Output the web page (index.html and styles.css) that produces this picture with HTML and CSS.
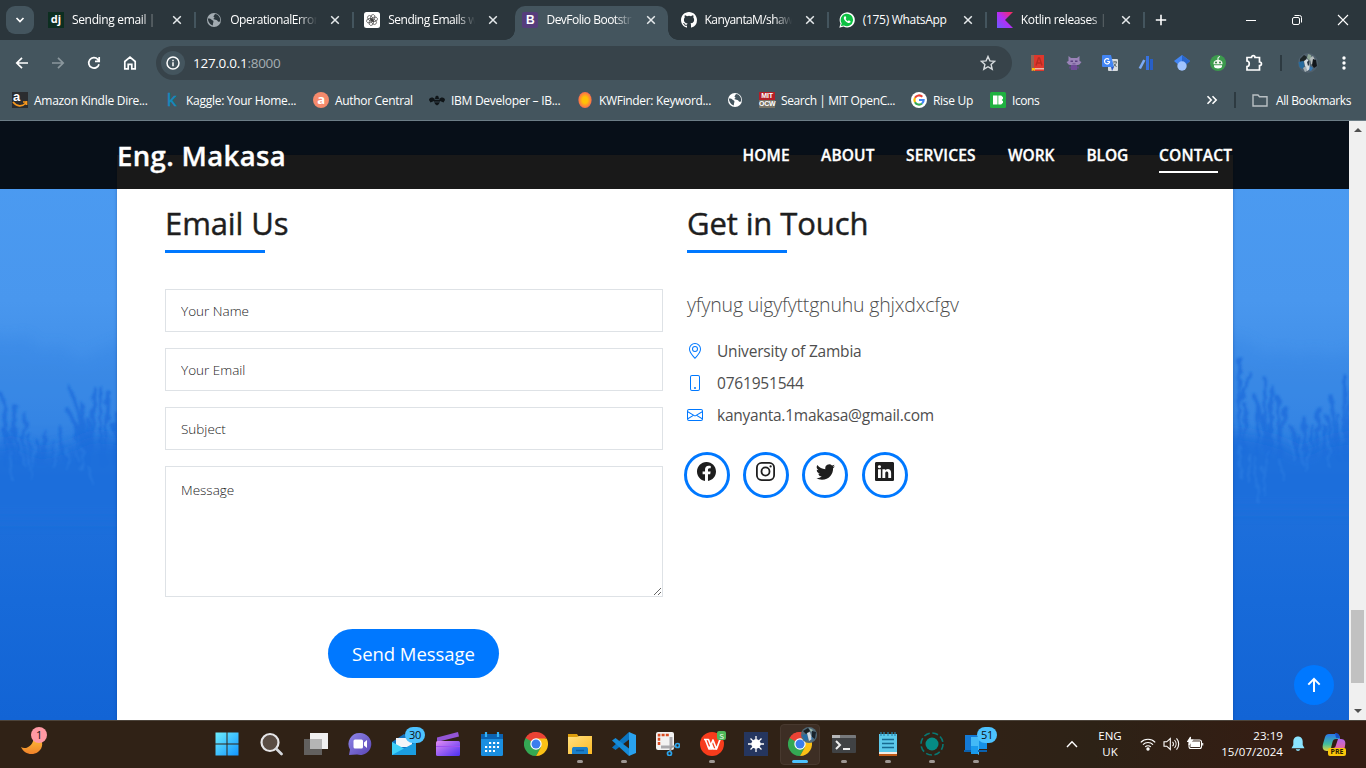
FILE: index.html
```html
<!DOCTYPE html>
<html lang="en">
<head>
<meta charset="utf-8">
<title>DevFolio Bootstrap</title>
<link rel="stylesheet" href="styles.css">
</head>
<body>
<svg class="defs" width="0" height="0" aria-hidden="true">
  <defs>
    <linearGradient id="gCyan" x1="0" y1="0" x2="24" y2="24" gradientUnits="userSpaceOnUse"><stop offset="0" stop-color="#6ff0fd"/><stop offset="1" stop-color="#1093ff"/></linearGradient>
    <linearGradient id="gKotlin" x1="0" y1="1" x2="1" y2="0"><stop offset="0" stop-color="#6a5cff"/><stop offset=".5" stop-color="#b52df5"/><stop offset="1" stop-color="#ff2a50"/></linearGradient>
    <linearGradient id="gChat" x1="0" y1="0" x2="1" y2="1"><stop offset="0" stop-color="#8e86e8"/><stop offset="1" stop-color="#5a45b5"/></linearGradient>
    <linearGradient id="gClip" x1="0" y1="0" x2="1" y2="1"><stop offset="0" stop-color="#e38cf4"/><stop offset="1" stop-color="#4b30f0"/></linearGradient>
    <linearGradient id="gFold" x1="0" y1="0" x2="1" y2="1"><stop offset="0" stop-color="#ffe080"/><stop offset="1" stop-color="#fcba24"/></linearGradient>
    <linearGradient id="gMoon" x1="0" y1="0" x2="0" y2="1"><stop offset="0" stop-color="#ffc83a"/><stop offset="1" stop-color="#f0822a"/></linearGradient>
    <linearGradient id="gCop1" x1="0" y1="0" x2="0" y2="1"><stop offset="0" stop-color="#2a78ea"/><stop offset=".6" stop-color="#43bf9c"/><stop offset="1" stop-color="#e4d540"/></linearGradient>
    <linearGradient id="gCop2" x1="0" y1="0" x2="0" y2="1"><stop offset="0" stop-color="#b266ee"/><stop offset="1" stop-color="#f4688a"/></linearGradient>
    <radialGradient id="gSun"><stop offset=".4" stop-color="#ffc107"/><stop offset="1" stop-color="#fb6b50"/></radialGradient>
    <symbol id="x" viewBox="0 0 10 10"><path d="M1.200 1.200l7.600 7.600M8.800 1.200L1.200 8.800" stroke="#e6eaec" stroke-width="1.500"/></symbol>
    <symbol id="globe" viewBox="0 0 16 16"><circle cx="8" cy="8" r="7" fill="currentColor"/><path d="M2 6.500c2 0 3 .3 3.600 1.300l1.600 1c.8 1-.4 2.200-.4 4.700C4 12.600 1.800 9.500 2 6.500zM9 2l-1.600 2.400 1.200 1.400-1.400 1.200 3.800 1.200 1.200 1.600 2-.4C14.800 5.500 12 2 9 2z" fill="var(--land)"/></symbol>
    <symbol id="chrome" viewBox="0 0 24 24"><path d="M12 12L1.600 6A12 12 0 0 1 22.400 6z" fill="#ea4335"/><path d="M12 12V0A12 12 0 0 0 1.600 6L6.800 15z" fill="#ea4335"/><path d="M12 12L1.600 6A12 12 0 0 0 12 24l5.200-9z" fill="#34a853"/><path d="M12 6.500H22.700A12 12 0 0 1 12 24l5-9z" fill="#fbc116"/><circle cx="12" cy="12" r="5.700" fill="#fff"/><circle cx="12" cy="12" r="4.500" fill="#3b7ded"/></symbol>
  </defs>
</svg>

<div class="screen">
  <header class="chrome">
    <div class="tabstrip">
      <button class="tabsearch"><svg width="10" height="8" viewBox="0 0 10 8" fill="none" stroke="#fff" stroke-width="1.700"><path d="M1.500 2L5 5.500 8.500 2"/></svg></button>
      <div class="tab"><span class="fav dj">dj</span><span class="title t1">Sending email | D</span><svg class="close"><use href="#x"/></svg></div>
      <div class="tab"><svg class="fav grey"><use href="#globe"/></svg><span class="title t2">OperationalError</span><svg class="close"><use href="#x"/></svg></div>
      <div class="tab nosep"><svg class="fav" viewBox="0 0 16 16"><rect width="16" height="16" rx="2.500" fill="#fff"/><g fill="none" stroke="#333" stroke-width=".6"><ellipse cx="8" cy="5.600" rx="2.200" ry="3.200" transform="rotate(15 8 8)"/><ellipse cx="8" cy="5.600" rx="2.200" ry="3.200" transform="rotate(75 8 8)"/><ellipse cx="8" cy="5.600" rx="2.200" ry="3.200" transform="rotate(135 8 8)"/><ellipse cx="8" cy="5.600" rx="2.200" ry="3.200" transform="rotate(195 8 8)"/><ellipse cx="8" cy="5.600" rx="2.200" ry="3.200" transform="rotate(255 8 8)"/><ellipse cx="8" cy="5.600" rx="2.200" ry="3.200" transform="rotate(315 8 8)"/></g></svg><span class="title t3">Sending Emails w</span><svg class="close"><use href="#x"/></svg></div>
      <div class="tab active nosep"><span class="fav boot">B</span><span class="title t4">DevFolio Bootstr</span><svg class="close"><use href="#x"/></svg></div>
      <div class="tab"><svg class="fav" viewBox="0 0 16 16" fill="#fff"><path d="M8 0C3.580 0 0 3.580 0 8c0 3.540 2.290 6.530 5.470 7.590.4.070.55-.17.55-.38 0-.19-.01-.82-.01-1.490-2.010.37-2.530-.49-2.690-.94-.09-.23-.48-.94-.82-1.130-.28-.15-.68-.52-.01-.53.63-.01 1.080.58 1.230.82.72 1.210 1.870.87 2.330.66.070-.52.28-.87.51-1.070-1.780-.2-3.640-.89-3.640-3.950 0-.87.31-1.590.82-2.150-.08-.2-.36-1.020.08-2.120 0 0 .67-.21 2.200.82a7.600 7.600 0 0 1 4 0c1.530-1.040 2.200-.82 2.200-.82.44 1.100.16 1.920.08 2.120.51.56.82 1.270.82 2.150 0 3.070-1.870 3.750-3.650 3.950.29.25.54.73.54 1.480 0 1.070-.01 1.930-.01 2.200 0 .21.15.46.55.38A8 8 0 0 0 16 8c0-4.420-3.580-8-8-8z"/></svg><span class="title t5">KanyantaM/shaw</span><svg class="close"><use href="#x"/></svg></div>
      <div class="tab"><svg class="fav" viewBox="0 0 16 16"><path d="M.3 15.700l1.200-4.200A7.600 7.600 0 1 1 4.600 14.600z" fill="#fff"/><path d="M1.900 14.100l.8-2.800A6.200 6.200 0 1 1 5 13.400z" fill="#0dc143"/><path d="M5.600 4.300c-1.600 1.400-.6 3.300 1 4.900 1.700 1.600 3.700 2.500 4.900 1v-1L9.800 8.300l-1 .9C7.800 8.800 7 8 6.600 7l.7-.9-.7-1.800z" fill="#fff"/></svg><span class="title t6">(175) WhatsApp</span><svg class="close"><use href="#x"/></svg></div>
      <div class="tab"><svg class="fav" viewBox="0 0 16 16"><path d="M0 0h16L8 8l8 8H0z" fill="url(#gKotlin)"/></svg><span class="title t7">Kotlin releases | K</span><svg class="close"><use href="#x"/></svg></div>
      <svg class="newtab" width="12" height="12" viewBox="0 0 12 12" stroke="#fff" stroke-width="1.600"><path d="M6 .8v10.400M.8 6h10.400"/></svg>
      <div class="wincontrols">
        <svg width="12" height="12" viewBox="0 0 12 12" stroke="#fff"><path d="M1 6.500h10"/></svg>
        <svg width="12" height="12" viewBox="0 0 12 12" stroke="#fff" fill="none"><rect x="1.500" y="3.500" width="7" height="7" rx="1.500"/><path d="M3.500 1.500H8.500a2 2 0 0 1 2 2v5"/></svg>
        <svg width="12" height="12" viewBox="0 0 12 12" stroke="#fff" stroke-width="1.100"><path d="M1 1l10 10M11 1L1 11"/></svg>
      </div>
    </div>

    <div class="toolbar">
      <div class="navbuttons">
        <svg viewBox="0 0 16 16"><path d="M14 8H3M8 2.800L2.800 8 8 13.200"/></svg>
        <svg class="dim" viewBox="0 0 16 16"><path d="M2 8h11M8 2.800L13.200 8 8 13.200"/></svg>
        <svg viewBox="0 0 16 16"><path d="M13 9.200A5.200 5.200 0 1 1 11.800 4.400L13 5.600M13.200 2v4.300H9"/></svg>
        <svg viewBox="0 0 16 16"><path d="M2.800 6.500L8 2.200l5.200 4.300v7.300H9.800V9.300H6.200v4.500H2.800z"/></svg>
      </div>
      <div class="omnibox">
        <span class="siteinfo"><svg width="14" height="14" viewBox="0 0 14 14" fill="none" stroke="#fff" stroke-width="1.500"><circle cx="7" cy="7" r="6"/><path d="M7 6.300v3.900M7 3.700v1.500"/></svg></span>
        <span class="url">127.0.0.1<span>:8000</span></span>
        <svg class="star" width="16" height="16" viewBox="0 0 16 16" fill="none" stroke="#d7dcdf" stroke-width="1.400"><path d="M8 1.500l1.900 4.400 4.800.4-3.600 3.200 1.100 4.700L8 11.700l-4.200 2.500 1.100-4.700L1.300 6.300l4.800-.4z"/></svg>
      </div>
      <div class="extensions">
        <svg viewBox="0 0 16 16"><path d="M1 0h13v16H1z" fill="#df372c"/><path d="M1 0h3v16H1z" fill="#936455"/><path d="M4 13h10v1.500H4z" fill="#f1b8a8"/><path d="M2 13h3v3l-1.500-1L2 16z" fill="#ffc107"/><path d="M6 10.500L8.500 3h1l2.500 7.500M7 8h4" fill="none" stroke="#b52c22" stroke-width="1.400"/></svg>
        <svg viewBox="0 0 16 16"><path d="M2.500 1l2.500 2h6l2.500-2v5l2 1-2 2.500-1.500.5H4L2.500 9.500.5 7l2-1z" fill="#9a83b8"/><path d="M5 10h6v5H5z" fill="#6f4b98"/><path d="M4.500 5.500H7V7H4.500zM9 5.500h2.500V7H9zM6.500 8.500h3v.8h-3z" fill="#5a4180"/><path d="M4 11.500v2M12 11.500v2" stroke="#6c4997" stroke-width="1.400"/></svg>
        <svg viewBox="0 0 16 16"><rect x="6" y="4" width="10" height="12" rx="1" fill="#d8dcdf"/><path d="M0 1a1 1 0 0 1 1-1h8l3 12H1a1 1 0 0 1-1-1z" fill="#4285f4"/><path d="M7.700 6.500A2.600 2.600 0 1 1 7 4.500M5.200 6.500h2.500" fill="none" stroke="#fff" stroke-width="1.200"/><path d="M11 7h4M13 6v1M14.500 7c-.5 2-1.500 3.500-3 4.500M11.800 8.500l2.700 3.500" fill="none" stroke="#5c6970" stroke-width="1"/><path d="M9 12h3l-2 4z" fill="#2a56c6"/></svg>
        <svg viewBox="0 0 16 16"><path d="M1.800 13.500L6.300 5" stroke="#7baaf7" stroke-width="2.600"/><path d="M8 1h3v14H8z" fill="#3772e0"/><path d="M12 4h3v11h-3z" fill="#285fc7"/></svg>
        <svg viewBox="0 0 16 16"><path d="M8 0l8 6-4 3.500H4L0 6z" fill="#4285f4"/><path d="M8 0l8 6-4 3.500L8 7z" fill="#2a66cc"/><circle cx="8" cy="11" r="4.700" fill="#a0c3ff"/></svg>
        <svg viewBox="0 0 16 16"><circle cx="8" cy="8" r="8" fill="#3c9a4d"/><path d="M3.500 8.500c0-5 9-5 9 0v.8h-9z" fill="#f2f7ee"/><path d="M4 10.300h8v1.200c0 2.500-8 2.500-8 0z" fill="#fff"/><path d="M8 5V2.500l2-1" stroke="#fff" fill="none"/><circle cx="6" cy="7.500" r="1" fill="#317d3c"/><circle cx="10" cy="7.500" r="1" fill="#317d3c"/></svg>
        <svg class="puzzle" viewBox="0 0 18 18" fill="none" stroke="#fff" stroke-width="1.700"><path d="M2 3.500h4.500c0-2.600 3.500-2.600 3.500 0h4.500V8c2.600 0 2.600 3.500 0 3.500V16H2v-3.500c3 0 3-5.500 0-5.500z"/></svg>
      </div>
      <span class="vsep"></span>
      <svg class="avatar" viewBox="0 0 20 20"><circle cx="10" cy="10" r="10" fill="#50606d"/><path d="M2 6l4-4 3 2-2 4-5 1z" fill="#1d2526"/><path d="M.5 9l5-1 1 5-2 3-3-2z" fill="#266a9d"/><path d="M6 8l3-2 2 2 1 8-3 2-2-5z" fill="#d5dde1"/><path d="M10 1l3 1 1 4-2 2-3-3z" fill="#8da596"/><path d="M12 5l3-2 2 4-2 5-2-1z" fill="#b5bcbd"/><path d="M15 6l3 1 1 6-3 2-2-3z" fill="#11151a"/><path d="M5 15l3-2 1 5-2 1z" fill="#a4afb4"/><path d="M12 13l3 2-2 3-2-1z" fill="#3477b4"/><path d="M9 9l2-2v5l-1 1z" fill="#293845"/></svg>
      <svg class="kebab" width="4" height="16" viewBox="0 0 4 16" fill="#fff"><circle cx="2" cy="3" r="1.700"/><circle cx="2" cy="8" r="1.700"/><circle cx="2" cy="13" r="1.700"/></svg>
    </div>

    <div class="bookmarks">
      <a class="bm b1"><span class="amazon">a<svg width="16" height="7" viewBox="0 0 16 7"><path d="M1 1c4 5 9 5 13 1M14.500 0v4M11 1h4" stroke="#f7981d" stroke-width="1.700" fill="none"/></svg></span><span>Amazon Kindle Dire...</span></a>
      <a class="bm b2"><span class="kaggle">k</span><span>Kaggle: Your Home...</span></a>
      <a class="bm b3"><span class="author">a</span><span>Author Central</span></a>
      <a class="bm b4"><svg class="ic" viewBox="0 0 16 16" fill="#101518"><path d="M0 8c0-3 4-3.500 6-1l.5-2.500 1.500-1 1.500 1L10 7c2-2.500 6-2 6 1l-1.500 2.500L11 9l-1 3-2 1.500L6 12 5 9l-3.500 1.500z"/><path d="M5.500 7.500h5M5.500 10h5" stroke="#44555e" stroke-width=".7"/></svg><span>IBM Developer – IB...</span></a>
      <a class="bm b5"><svg class="ic" viewBox="0 0 16 16"><ellipse cx="8" cy="8" rx="6.600" ry="8" fill="url(#gSun)"/></svg><span>KWFinder: Keyword...</span></a>
      <a class="bm"><svg class="ic white"><use href="#globe"/></svg></a>
      <a class="bm b7"><span class="mit"><i>MIT</i><i>OCW</i></span><span>Search | MIT OpenC...</span></a>
      <a class="bm b8"><svg class="ic" viewBox="0 0 16 16" fill="none" stroke-width="2.200"><circle cx="8" cy="8" r="8" fill="#fff" stroke="none"/><path d="M11.300 4.800A4.600 4.600 0 0 0 4 5.800" stroke="#ea4335"/><path d="M4 5.800a4.600 4.600 0 0 0 0 4.400" stroke="#fbbc05"/><path d="M4 10.200a4.600 4.600 0 0 0 7 1.300" stroke="#34a853"/><path d="M11 11.500A4.600 4.600 0 0 0 12.600 8H8" stroke="#4285f4"/></svg><span>Rise Up</span></a>
      <a class="bm b9"><svg class="ic" viewBox="0 0 16 16"><rect width="16" height="16" rx="1.500" fill="#1fb141"/><path d="M3 3.500h4.500v9H3zM8.300 3.500h2.900L13 5.300v1.500L11.800 8 13 9.200v1.500l-1.800 1.800H8.300z" fill="#fff"/></svg><span>Icons</span></a>
      <div class="bmend">
        <svg width="12" height="10" viewBox="0 0 12 10" fill="none" stroke="#fff" stroke-width="1.600"><path d="M1.500 1.200L5.200 5 1.500 8.800M6.500 1.200L10.200 5 6.500 8.800"/></svg>
        <span class="vsep"></span>
        <svg width="16" height="13" viewBox="0 0 16 13" fill="none" stroke="#b9c0c4" stroke-width="1.400"><path d="M1 1h5l1.500 1.800H15V12H1z"/></svg>
        <span class="all">All Bookmarks</span>
      </div>
    </div>
  </header>

  <main class="page">
    <div class="view">
      <svg class="forest" width="1349" height="599" viewBox="0 121 1349 599" preserveAspectRatio="none">
        <defs>
          <linearGradient id="sky" x1="0" y1="0" x2="0" y2="1"><stop offset="0" stop-color="#4c9cf2"/><stop offset=".3" stop-color="#4997ee"/><stop offset=".42" stop-color="#408ee8"/><stop offset=".5" stop-color="#3a89e6"/><stop offset=".6" stop-color="#2071dc"/><stop offset=".8" stop-color="#176ad9"/><stop offset="1" stop-color="#1264d5"/></linearGradient>
          <filter id="soft" x="-5%" y="-5%" width="110%" height="110%"><feTurbulence type="fractalNoise" baseFrequency=".09" numOctaves="2" seed="4" result="n"/><feDisplacementMap in="SourceGraphic" in2="n" scale="9" result="d"/><feGaussianBlur in="d" stdDeviation=".8"/></filter>
          <filter id="haze" x="-5%" y="-20%" width="110%" height="140%"><feGaussianBlur stdDeviation="7"/></filter>
        </defs>
        <rect y="121" width="1349" height="599" fill="url(#sky)"/>
        <g filter="url(#haze)" fill="#2a7de0" opacity=".25"><path d="M-19 335l30 5 15-5 14 15 20-5 20 15 20-10 40-16v110H-19z"/><path d="M1213 335l32 5 20 14 20-4 12 6 20-5 12 6 40-12v120H1213z"/></g>
        <g filter="url(#soft)" fill="none" stroke="#1d6cdb" stroke-width="3.600" stroke-linecap="round" opacity=".78">
          <path d="M2 395l5 38 8 30M15 405l-5 50M26 415l-6 50M14 428l6 36M46 432l-4 30M59 426l6 36M70 388l10 30 4 46M66 408l12 20 8 36M82 405l4 50M94 388l-4 76M101 388l0 76M109 392l-4 70M118 415l-6 48M114 424v40M88 420v40M76 428v34M38 442v20M52 440l3 22M5 430v34M30 436l-3 28"/>
          <path d="M1240 358l-2 92M1249 372l-8 32M1264 378l2 80M1273 388l-6 70M1254 395l10 30 2 34M1277 396l4 60M1286 408l-8 50M1304 418l2 40M1320 408l-4 50M1331 396l6 62M1345 376l-1 84M1351 390l-6 68M1327 416l6 40M1292 428l4 30M1246 405l-3 50M1258 410v46M1271 420v40M1312 425v34M1338 415v44M1298 436v24M1348 420v40M1324 425v34"/>
        </g>
        <g filter="url(#haze)" fill="#1d6edb" opacity=".85"><path d="M-25 448l41-6 24 12 30-8 22-10 45 4v80H-25z"/><path d="M1210 430l43 5 30 8 18 10 25-12 44-6v75H1210z"/></g>
        <g filter="url(#soft)" fill="none" stroke="#4393ec" stroke-width="2" opacity=".28"><path d="M20 440l4 25M34 445l-3 35M52 437l4 25M66 448l3 24M84 450l-4 20M88 466l4 18M10 450l2 30M28 440v30M58 445l-4 24M74 440l3 20M1240 446l2 34M1254 455l4 48M1268 450l-5 40M1290 440l5 22M1310 452l-5 20M1328 440l2 28M1280 460l3 20M1248 452v30M1262 466l3 30M1300 444l3 22"/></g>
      </svg>
      <section class="card">
        <div class="col">
          <h5>Email Us</h5>
          <form class="form">
            <input type="text" placeholder="Your Name">
            <input type="text" placeholder="Your Email">
            <input type="text" placeholder="Subject">
            <textarea placeholder="Message"></textarea>
            <button type="button" class="send">Send Message</button>
          </form>
        </div>
        <div class="col">
          <h5 class="touch">Get in Touch</h5>
          <p class="lead">yfynug uigyfyttgnuhu ghjxdxcfgv</p>
          <ul class="info">
            <li class="i1"><svg viewBox="0 0 16 16"><path d="M12.166 8.940c-.524 1.062-1.234 2.120-1.960 3.070A31.500 31.500 0 0 1 8 14.580a31.500 31.500 0 0 1-2.206-2.570c-.726-.95-1.436-2.008-1.960-3.070C3.304 7.867 3 6.862 3 6a5 5 0 0 1 10 0c0 .862-.305 1.867-.834 2.940M8 16s6-5.686 6-10A6 6 0 0 0 2 6c0 4.314 6 10 6 10"/><path d="M8 8a2 2 0 1 1 0-4 2 2 0 0 1 0 4m0 1a3 3 0 1 0 0-6 3 3 0 0 0 0 6"/></svg><span>University of Zambia</span></li>
            <li class="i2"><svg viewBox="0 0 16 16"><path d="M11 1a1 1 0 0 1 1 1v12a1 1 0 0 1-1 1H5a1 1 0 0 1-1-1V2a1 1 0 0 1 1-1zM5 0a2 2 0 0 0-2 2v12a2 2 0 0 0 2 2h6a2 2 0 0 0 2-2V2a2 2 0 0 0-2-2z"/><path d="M8 14a1 1 0 1 0 0-2 1 1 0 0 0 0 2"/></svg><span>0761951544</span></li>
            <li class="i3"><svg viewBox="0 0 16 16"><path d="M0 4a2 2 0 0 1 2-2h12a2 2 0 0 1 2 2v8a2 2 0 0 1-2 2H2a2 2 0 0 1-2-2zm2-1a1 1 0 0 0-1 1v.217l7 4.200 7-4.200V4a1 1 0 0 0-1-1zm13 2.383-4.708 2.825L15 11.105zm-.034 6.876-5.640-3.471L8 9.583l-1.326-.795-5.640 3.470A1 1 0 0 0 2 13h12a1 1 0 0 0 .966-.741M1 11.105l4.708-2.897L1 5.383z"/></svg><span>kanyanta.1makasa@gmail.com</span></li>
          </ul>
          <div class="social">
            <a><svg viewBox="0 0 16 16"><path d="M16 8.049c0-4.446-3.582-8.050-8-8.050C3.580 0-.002 3.603-.002 8.050c0 4.017 2.926 7.347 6.750 7.951v-5.625h-2.030V8.050H6.750V6.275c0-2.017 1.195-3.131 3.022-3.131.876 0 1.791.157 1.791.157v1.980h-1.009c-.993 0-1.303.621-1.303 1.258v1.510h2.218l-.354 2.326H9.250V16c3.824-.604 6.750-3.934 6.750-7.951"/></svg></a>
            <a><svg viewBox="0 0 16 16" fill="none" stroke="currentColor" stroke-width="1.500"><rect x=".75" y=".75" width="14.500" height="14.500" rx="4"/><circle cx="8" cy="8" r="3.400"/><circle cx="12.300" cy="3.700" r=".95" fill="currentColor" stroke="none"/></svg></a>
            <a><svg viewBox="0 0 16 16"><path d="M5.026 15c6.038 0 9.341-5.003 9.341-9.334q.002-.211-.006-.422A6.700 6.700 0 0 0 16 3.542a6.700 6.700 0 0 1-1.889.518 3.300 3.300 0 0 0 1.447-1.817 6.500 6.500 0 0 1-2.087.793A3.286 3.286 0 0 0 7.875 6.030a9.320 9.320 0 0 1-6.767-3.429 3.290 3.290 0 0 0 1.018 4.382A3.300 3.300 0 0 1 .64 6.575v.045a3.290 3.290 0 0 0 2.632 3.218 3.200 3.200 0 0 1-.865.115 3 3 0 0 1-.614-.057 3.280 3.280 0 0 0 3.067 2.277A6.600 6.600 0 0 1 .78 13.580a6 6 0 0 1-.780-.045A9.340 9.340 0 0 0 5.026 15"/></svg></a>
            <a><svg viewBox="0 0 16 16"><path d="M0 1.146C0 .513.526 0 1.175 0h13.650C15.474 0 16 .513 16 1.146v13.708c0 .633-.526 1.146-1.175 1.146H1.175C.526 16 0 15.487 0 14.854zm4.943 12.248V6.169H2.542v7.225zm-1.200-8.212c.837 0 1.358-.554 1.358-1.248-.015-.709-.520-1.248-1.342-1.248S2.400 3.226 2.400 3.934c0 .694.521 1.248 1.327 1.248zm4.908 8.212V9.359c0-.216.016-.432.080-.586.173-.431.568-.878 1.232-.878.869 0 1.216.662 1.216 1.634v3.865h2.401V9.250c0-2.220-1.184-3.252-2.764-3.252-1.274 0-1.845.7-2.165 1.193v.025h-.016l.016-.025V6.169h-2.400c.030.678 0 7.225 0 7.225z"/></svg></a>
          </div>
        </div>
      </section>
      <nav class="navbar">
        <a class="brand">Eng. Makasa</a>
        <div class="links"><a class="n1">HOME</a><a class="n2">ABOUT</a><a class="n3">SERVICES</a><a class="n4">WORK</a><a class="n5">BLOG</a><a class="n6 current">CONTACT</a></div>
      </nav>
      <a class="totop"><svg width="16" height="16" viewBox="0 0 16 16" fill="none" stroke="#fff" stroke-width="2"><path d="M8 15V2M2.300 7.600L8 1.900l5.700 5.700"/></svg></a>
    </div>
    <div class="scrollbar"><i class="up"></i><i class="thumb"></i><i class="down"></i></div>
  </main>

  <footer class="taskbar">
    <div class="weather"><svg width="24" height="24" viewBox="0 0 24 24"><path d="M1 15c4 3 13 0 13-12 9 2 11 12 4 17-6 4-14 2-17-5z" fill="url(#gMoon)"/></svg><b class="badge pink">1</b></div>
    <div class="apps">
      <span class="start"><svg viewBox="0 0 24 24" fill="url(#gCyan)"><path d="M.5.5h11v11H.5zM12.500.5h11v11h-11zM.5 12.500h11v11H.5zM12.500 12.500h11v11h-11z"/></svg></span>
      <span class="start"><svg viewBox="0 0 24 24" fill="none"><circle cx="11" cy="10.500" r="8.500" fill="#5a4d44" stroke="#e6e6e8" stroke-width="2.200"/><path d="M17.500 17l5 5" stroke="#d5d8dc" stroke-width="2.700" stroke-linecap="round"/></svg></span>
      <span><svg viewBox="0 0 24 24"><path d="M6 1h18v16H6z" fill="#f0f0f0"/><path d="M0 7h18v16H0z" fill="#6b6b6b" opacity=".85"/><path d="M6 7h12v10H6z" fill="#b5b5b5"/></svg></span>
      <span><svg viewBox="0 0 24 24"><path d="M12 1a11 11 0 1 1-3 21.500L1 23l1-5.500A11 11 0 0 1 12 1z" fill="url(#gChat)"/><rect x="5.500" y="7.500" width="9.500" height="9" rx="1.500" fill="#fff"/><path d="M16 10.500l3-2.500v8l-3-2.500z" fill="#fff"/></svg></span>
      <span><svg viewBox="0 0 24 24"><path d="M0 10L12 2l12 8v13H0z" fill="#1272bf"/><path d="M4 6h16v9H4z" fill="#f2f4f8"/><path d="M0 10l24 13H0z" fill="#3fd0f8"/><path d="M24 10L0 23h24z" fill="#1a9de0"/></svg><b class="badge">30</b></span>
      <span><svg viewBox="0 0 24 24"><path d="M1 5.500L22 0l1 4.500L1 10z" fill="#9355d6"/><rect y="9" width="24" height="15" rx="1.500" fill="url(#gClip)"/><path d="M0 14.500h24" stroke="#a050f0" stroke-width="1"/></svg></span>
      <span><svg viewBox="0 0 24 24"><rect x="1" y="2" width="22" height="22" rx="1.500" fill="#1a8fe0"/><path d="M1 2h22v5H1z" fill="#0b62b0"/><path d="M6 0v5M18 0v5" stroke="#35b2f5" stroke-width="2.200"/><path d="M9 11h11M5 15h14M5 19h10" stroke="#fff" stroke-width="2.200" stroke-dasharray="2.200 1.800"/></svg></span>
      <span><svg><use href="#chrome"/></svg></span>
      <span class="run"><svg viewBox="0 0 24 24"><path d="M0 2h9l2 3h11v6H0z" fill="#dc9d0c"/><path d="M0 5h9l2-1h13v18H0z" fill="url(#gFold)"/><path d="M4 22v-5c0-1.500 1-2 2-2h12c1 0 2 .5 2 2v5z" fill="#1a80ca"/><path d="M8 18.500h8" stroke="#0c5da3" stroke-width="1.500"/></svg></span>
      <span class="run"><svg viewBox="0 0 24 24"><path d="M17 0l7 3v18l-7 3z" fill="#29a2ef"/><path d="M17 0v7.500L3.500 18 0 15.500z" fill="#0b74c0"/><path d="M17 24v-7.500L3.500 6 0 8.500z" fill="#168bd8"/></svg></span>
      <span><svg viewBox="0 0 24 24"><rect y="0" width="18" height="18" rx="2" fill="#f2f2f2"/><path d="M3 13V3h10" stroke="#d94b20" stroke-width="2.500" fill="none" stroke-dasharray="3 1.200"/><path d="M15 5v10M5 15h10" stroke="#a9a9ad" stroke-width="3" fill="none"/><path d="M15 15l5-1M15 15l-1 5" stroke="#999" stroke-width="2"/><circle cx="21.500" cy="13.500" r="2" fill="none" stroke="#2aa4ec" stroke-width="1.700"/><circle cx="13.500" cy="21.500" r="2" fill="none" stroke="#2aa4ec" stroke-width="1.700"/></svg></span>
      <span class="run"><svg viewBox="0 0 24 24"><circle cx="12" cy="12" r="12" fill="#f73c1c"/><path d="M4 7.500h4.500l3.500 9.500h-3L5.500 8M9.500 16.500L13 8l3.500 9L20 7.500M16.500 17h-3L11 11" stroke="#fff" stroke-width="1.700" stroke-linejoin="round" fill="none"/></svg><b class="badge green">S</b></span>
      <span><svg viewBox="0 0 24 24"><path d="M0 0h24v24H0z" fill="#25365f"/><circle cx="12" cy="12" r="4.700" fill="#fff"/><path d="M12 4v16M4 12h16M6.500 6.500l11 11M17.500 6.500l-11 11" stroke="#fff" stroke-width="1.300"/></svg></span>
      <span class="run focus"><svg><use href="#chrome"/></svg><svg class="mini" viewBox="0 0 16 16"><circle cx="8" cy="8" r="8" fill="#526a78"/><path d="M2 4l5-3 2 3-4 3z" fill="#161f22"/><path d="M1 8l5-1 1 6-3 1z" fill="#236ea6"/><path d="M6 6l3-1 2 7-3 2z" fill="#cfdbe2"/><path d="M11 4l4 1-1 7-3-2z" fill="#18232c"/><path d="M8 1l4 2-2 2z" fill="#9db6a9"/><path d="M10 10l2 1-1 3z" fill="#3477b4"/></svg></span>
      <span class="run"><svg viewBox="0 0 24 24"><rect y="3" width="24" height="18" rx="1" fill="#404244"/><path d="M0 4a1 1 0 0 1 1-1h22a1 1 0 0 1 1 1v2H0z" fill="#77797b"/><path d="M0 3h8v3H0z" fill="#b6b7b8"/><path d="M4 9l4 4-4 4M11 17h7" stroke="#eee" stroke-width="2" fill="none"/></svg></span>
      <span class="run"><svg viewBox="0 0 24 24"><path d="M3 21h18v3H3z" fill="#c05b18"/><path d="M3 2h18v19H3z" fill="#5cc9ea"/><path d="M3 20h18v2H3z" fill="#f2ece4"/><path d="M5 0v4M8 0v4M12 0v4M16 0v4M19 0v4" stroke="#2789b4" stroke-width="1.200"/><path d="M6 7.500h12M6 11.500h12M6 15.500h12" stroke="#176a91" stroke-width="1.500"/></svg></span>
      <span class="run"><svg viewBox="0 0 24 24"><circle cx="12" cy="12" r="6.500" fill="#058b85"/><circle cx="12" cy="12" r="11" fill="none" stroke="#087873" stroke-width="1.600" stroke-dasharray="6 2.640"/></svg></span>
      <span class="run"><svg viewBox="0 0 24 24"><path d="M1 3h12v15H1z" fill="#147ad6"/><path d="M7 5h16v12H7z" fill="#1691e6"/><path d="M7 5h8v18l-4-3-4 1z" fill="#43b9f6"/><path d="M0 18h23v2H0z" fill="#0b61ad"/><path d="M7 14h7v8H7z" fill="#199aec"/></svg><b class="badge">51</b></span>
    </div>
    <div class="tray">
      <svg class="caret" width="12" height="8" viewBox="0 0 12 8" fill="none" stroke="#fff" stroke-width="1.400"><path d="M1 7l5-5.200L11 7"/></svg>
      <div class="lang">ENG<br>UK</div>
      <div class="status">
        <svg width="16" height="16" viewBox="0 0 16 16" fill="none" stroke="#fff" stroke-width="1.200"><path d="M.8 6.300a10 10 0 0 1 14.400 0M3 8.600a7 7 0 0 1 10 0M5.200 10.900a4 4 0 0 1 5.600 0"/><circle cx="8" cy="13" r="1.100" fill="#fff"/></svg>
        <svg width="17" height="16" viewBox="0 0 17 16" fill="none" stroke="#fff" stroke-width="1.100"><path d="M1 5.800h2.700L7.300 2.500v11L3.700 10.200H1zM9.500 5.800a3 3 0 0 1 0 4.400M11.500 4a6 6 0 0 1 0 8M13.500 2.300a8.500 8.500 0 0 1 0 11.400"/></svg>
        <svg width="17" height="16" viewBox="0 0 17 16" fill="none" stroke="#fff" stroke-width="1.100"><rect x="2" y="4" width="12.500" height="8.500" rx="2"/><rect x="4" y="6" width="8.500" height="4.500" fill="#fff"/><path d="M15.700 7v2.500"/><path d="M3.500 1L.7 5.500h2L2 9l3.500-5H3.200z" fill="#fff"/></svg>
      </div>
      <div class="clock">23:19<br>15/07/2024</div>
      <svg class="bell" width="14" height="16" viewBox="0 0 14 16" fill="#8be4ff"><path d="M7 .5c3 0 4.700 2.200 4.700 5v3.600l1.800 3.100H.5l1.800-3.100V5.500C2.300 2.700 4 .5 7 .5zM4.800 13.300h4.400c-.4 2.100-4 2.100-4.400 0z"/></svg>
      <div class="copilot"><svg width="24" height="24" viewBox="0 0 24 24"><path d="M7 2h7c3 0 4 2 4 5h-4c-2 0-3 1-3.500 3L9 16c-.5 2-2 3-4 3-4 0-5-3-4-7l2-7c.6-2 2-3 4-3z" fill="url(#gCop1)"/><path d="M16 7h3c4 0 5 3 4 7l-1 5h-8l-3-3c2 0 2.500-1 3-3z" fill="url(#gCop2)"/><path d="M13 1c3 0 4 1 5 5h-4z" fill="#1851c8"/></svg><b>PRE</b></div>
    </div>
  </footer>
</div>
</body>
</html>
```

FILE: styles.css
```css
* { box-sizing: border-box; }
body { margin: 0; overflow: hidden; font-family: "Open Sans", "Noto Sans", sans-serif; }
svg { display: block; flex: none; }
.defs { position: absolute; }
.screen { width: 1366px; height: 768px; display: flex; flex-direction: column; overflow: hidden; }

/* browser frame */
.chrome { height: 121px; background: #44555e; border-bottom: 1px solid #6c7d86; color: #fff; }
.tabstrip { height: 40px; background: #2b363c; display: flex; align-items: center; padding-left: 6px; }
.tabsearch { width: 28px; height: 28px; border: 0; border-radius: 9px; background: #44555e; display: grid; place-items: center; padding: 0; margin-right: 6px; }
.tab { width: 158.150px; height: 34px; margin-top: 6px; padding: 0 0 6px 8px; display: flex; align-items: center; position: relative; flex: none; font-size: 12px; }
.tab::after { content: ""; position: absolute; right: 2px; top: 6px; width: 2px; height: 16px; background: #44555e; }
.tab.nosep::after { display: none; }
.tab.active { z-index: 1; }
.tab.active::before { content: ""; position: absolute; inset: 0 5px 0 1px; background: #44555e; border-radius: 10px 10px 0 0; z-index: -1; }
/* flared feet of the selected tab */
.tab.active::after { display: block; right: -5px; left: -9px; top: 24px; width: auto; height: 10px; z-index: -2; background: radial-gradient(circle at 0 0, transparent 9.500px, #44555e 10px) 0 0 / 10px 10px no-repeat, radial-gradient(circle at 100% 0, transparent 9.500px, #44555e 10px) 100% 0 / 10px 10px no-repeat; }
.fav { width: 16px; height: 16px; margin-right: 8px; flex: none; }
.fav.grey { color: #a2abb1; --land: #2b363c; }
.fav.dj { background: #0c2e20; font: bold 11px/14px "Open Sans", sans-serif; text-align: center; }
.fav.boot { background: #563d7c; border-radius: 2px; font: bold 12px/16px "Liberation Sans", sans-serif; text-align: center; }
.title { width: 88px; white-space: nowrap; letter-spacing: -.4px; line-height: 20px; mask-image: linear-gradient(90deg, #000 78%, transparent 99%); }
.t1, .t7 { letter-spacing: -.35px; }
.t2 { letter-spacing: -.45px; }
.t3, .t4 { letter-spacing: -.5px; }
.t5 { letter-spacing: -.6px; }
.t6 { mask-image: none; letter-spacing: -.3px; }
.close { width: 10px; height: 10px; margin-left: 12px; }
.newtab { margin-left: 8px; }
.wincontrols { margin-left: auto; display: flex; gap: 34px; padding-right: 17px; }

.toolbar { height: 46px; display: flex; align-items: center; padding-left: 14px; border-radius: 8px 8px 0 0; }
.navbuttons { display: flex; gap: 20px; width: 142px; }
.navbuttons svg { width: 16px; height: 16px; fill: none; stroke: #fff; stroke-width: 1.700; }
.navbuttons .dim { stroke: #8b979d; }
.omnibox { width: 856px; height: 34px; border-radius: 17px; background: #37434a; display: flex; align-items: center; padding: 0 16px 0 5px; }
.siteinfo { width: 24px; height: 24px; border-radius: 50%; background: #44555e; display: grid; place-items: center; }
.url { margin-left: 8px; font-size: 13.500px; letter-spacing: -.28px; }
.url span { color: #a5aeb3; }
.star { margin-left: auto; }
.extensions { display: flex; gap: 20px; margin-left: 18px; align-items: center; }
.extensions svg { width: 16px; height: 16px; }
.extensions .puzzle { width: 18px; height: 18px; margin: -1px -1px 0; }
.vsep { width: 2px; height: 16px; background: #2d3a41; flex: none; }
.toolbar .vsep { margin-left: 18px; }
.avatar { width: 20px; height: 20px; margin-left: 16px; }
.kebab { margin-left: 24px; }

.bookmarks { height: 28px; display: grid; grid-template-columns: 151px 150px 116px 148px 150px 32px 152px 79px 1fr auto; align-items: center; padding: 0 15px 0 12px; font-size: 12px; white-space: nowrap; }
.bm { display: flex; align-items: center; gap: 6px; letter-spacing: -.4px; height: 20px; }
.b1 { letter-spacing: -.28px; }
.b2, .b4 { letter-spacing: -.28px; }
.b2 { gap: 7px; }
.b3, .b5 { letter-spacing: -.33px; }
.b8 { letter-spacing: -.3px; }
.ic { width: 16px; height: 16px; }
.ic.white { color: #fff; --land: #44555e; }
.amazon { position: relative; width: 16px; height: 16px; background: #2b2d30; font: bold 13px/9px "Liberation Sans", sans-serif; padding-left: 1px; }
.amazon svg { position: absolute; left: 0; bottom: 0; }
.kaggle { width: 16px; font: 19px/18px "Liberation Sans", sans-serif; color: #1489bb; padding-left: 4px; -webkit-text-stroke: .4px; }
.author { width: 16px; height: 16px; border-radius: 50%; background: #f68a6c; font: bold 13px/14px "Open Sans", sans-serif; text-align: center; }
.mit { width: 16px; height: 16px; font: bold 7px/8px "Liberation Sans", sans-serif; letter-spacing: -.2px; text-align: center; background: linear-gradient(#b31e28 50%, #777265 50%); }
.mit i { display: block; font-style: normal; }
.bmend { display: flex; align-items: center; letter-spacing: -.38px; }
.bmend .vsep { margin: 0 16px 0 16px; }
.all { margin-left: 8px; width: 75px; }

/* page */
.page { height: 599px; display: flex; }
.view { width: 1349px; height: 599px; position: relative; overflow: hidden; }
.forest { position: absolute; inset: 0; }
.card { position: relative; margin: 34px 116px 0 117px; height: 620px; background: #fff; padding: 48px; display: grid; grid-template-columns: 498px 498px; gap: 24px; box-shadow: 0 1px 3px rgba(0,40,110,.35); color: #1e1e1e; }
h5 { margin: 0 0 36px; height: 50px; font-weight: 400; -webkit-text-stroke: .45px; font-size: 31px; line-height: 41px; letter-spacing: -.1px; border-bottom: 3px solid #0078ff; width: 100px; white-space: nowrap; }
.form { display: flex; flex-direction: column; gap: 16px; }
.form input, .form textarea { display: block; width: 498px; height: 43px; border: 1px solid #dee2e6; border-radius: 0; padding: 0 15px 0; font: 300 13.500px/20px "Open Sans", sans-serif; letter-spacing: 0; outline: 0; background: #fff; }
.form textarea { height: 131px; padding-top: 13px; resize: both; }
.form ::placeholder { color: #222; opacity: 1; }
.send { margin: 16px 0 0 163px; width: 171px; height: 49px; border: 0; border-radius: 25px; background: #0078ff; color: #fff; font: 18.500px "Open Sans", sans-serif; letter-spacing: -.05px; padding: 0; }
.lead { margin: 0 0 13px; font-size: 19.500px; font-weight: 300; line-height: 32px; padding-bottom: 1px; white-space: nowrap; letter-spacing: -.18px; color: #4e4e4e; }
.info { list-style: none; margin: 0; padding: 0; color: #4e4e4e; font-size: 15.500px; }
.info li { height: 32px; display: flex; align-items: center; gap: 14px; white-space: nowrap; letter-spacing: -.2px; }
.info .i3 { letter-spacing: -.24px; }
.info svg { width: 16px; height: 16px; fill: #0078ff; }
.social { display: flex; gap: 13.200px; margin: 21px 0 0 -3px; }
.social a { width: 46px; height: 46px; border: 3px solid #0078ff; border-radius: 50%; display: flex; justify-content: center; padding: 7px 1px 0 0; color: #1e1e1e; }
.social a:nth-child(3) { padding-right: 0; }
.social svg { width: 19px; height: 19px; fill: currentColor; }
.social svg[fill="none"] { fill: none; }
.navbar { position: absolute; inset: 0 0 auto 0; height: 68px; background: rgba(0,0,0,.9); color: #fff; display: flex; justify-content: space-between; align-items: center; padding: 2px 114px 0 117px; font-weight: 600; }
.brand { font-size: 27.500px; white-space: nowrap; letter-spacing: .36px; margin-top: -2px; -webkit-text-stroke: .35px; }
.links { display: grid; grid-template-columns: 78.500px 84.500px 102px 79px 72px 76px; font-size: 15.500px; white-space: nowrap; height: 34px; line-height: 32px; -webkit-text-stroke: .3px; letter-spacing: -.1px; }
.n2, .n3 { letter-spacing: .15px; }
.n1 { letter-spacing: .1px; }
.n6 { letter-spacing: .2px; }
.links .n1, .links .n2, .links .n5 { margin-left: -.5px; }
.current { background: linear-gradient(#fff, #fff) 0 100% / 59px 2px no-repeat; }
.totop { position: absolute; right: 15px; bottom: 15px; width: 40px; height: 40px; border-radius: 50%; background: #0078ff; display: grid; place-items: center; }
.scrollbar { width: 17px; background: #f0f0f0; display: flex; flex-direction: column; align-items: center; padding: 7px 0 7px; }
.up, .down { border: 4px solid transparent; border-top: 0; border-bottom: 4px solid #505050; height: 4px; }
.down { border-bottom: 0; border-top: 4px solid #505050; margin-top: auto; }
.thumb { width: 13px; height: 73px; margin-top: 478px; background: #c1c1c1; }

/* taskbar */
.taskbar { height: 48px; display: flex; align-items: center; border-top: 1px solid #4c443b; background: linear-gradient(90deg, #302216 0, #302216 73%, #2d2216 80%, #341d13 93%, #341d13); color: #fff; }
.weather { width: 206px; padding-left: 20px; position: relative; margin-top: -2px; }
.apps { display: flex; width: 792px; }
.apps span { position: relative; width: 44px; height: 47px; padding-bottom: 1px; display: grid; place-items: center; }
.apps .start { padding-right: 2px; }
.apps svg { width: 24px; height: 24px; }
.badge { position: absolute; right: 1px; top: 6px; min-width: 20px; height: 16px; border-radius: 8px; background: #4cc2ff; color: #111; font-size: 11px; line-height: 16px; font-weight: 500; text-align: center; letter-spacing: -.2px; }
.badge.pink { left: 31px; right: auto; top: -5px; min-width: 16px; width: 16px; background: #ff99a4; }
.badge.green { min-width: 8px; width: 9px; height: 9px; border-radius: 2px; background: #4fb95b; color: #fff; font-size: 8px; line-height: 9px; right: 8px; top: 10px; }
.run::after { content: ""; position: absolute; bottom: 5px; left: 19px; width: 6px; height: 3px; border-radius: 2px; background: #9d9793; }
.focus::before { content: ""; position: absolute; inset: 3px 2px; border: 1px solid #48392f; background: #3d2e24; border-radius: 4px; }
.focus svg { position: relative; }
.apps .focus::after { left: 14px; width: 16px; background: #4cc2ff; }
.apps .focus .mini { position: absolute; width: 16px; height: 16px; right: 5px; top: 6px; }
.tray { display: flex; align-items: center; font-size: 11.500px; line-height: 16px; height: 46px; letter-spacing: 0; margin: -1px 0 0 68px; }
.lang { width: 26px; text-align: center; margin-left: 19px; }
.status { display: flex; gap: 7px; margin-left: 17px; }
.clock { width: 79px; text-align: right; letter-spacing: .08px; }
.bell { margin-left: 8px; }
.copilot { position: relative; margin-left: 17px; }
.copilot b { position: absolute; left: 6px; bottom: 0; width: 18px; height: 8px; border-radius: 2px; background: #fbc70b; color: #2b1c00; font-size: 7px; line-height: 8px; letter-spacing: 0; text-align: center; }
```
